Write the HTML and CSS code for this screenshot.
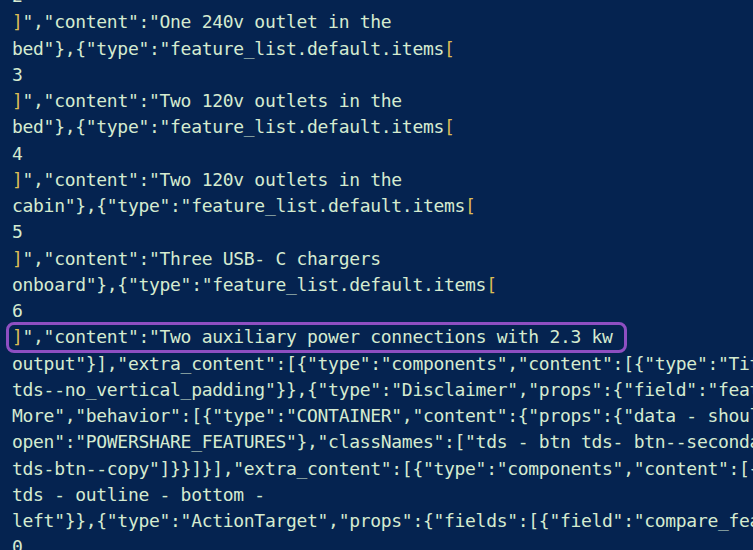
FILE: index.html
```html
<!DOCTYPE html>
<html>
<head>
<meta charset="utf-8">
<link rel="stylesheet" href="styles.css">
</head>
<body>
<div class="code">
<div class="ln">2</div>
<div class="ln"><span class="br">]</span>","content":"One 240v outlet in the</div>
<div class="ln">bed"},{"type":"feature_list.default.items<span class="br">[</span></div>
<div class="ln">3</div>
<div class="ln"><span class="br">]</span>","content":"Two 120v outlets in the</div>
<div class="ln">bed"},{"type":"feature_list.default.items<span class="br">[</span></div>
<div class="ln">4</div>
<div class="ln"><span class="br">]</span>","content":"Two 120v outlets in the</div>
<div class="ln">cabin"},{"type":"feature_list.default.items<span class="br">[</span></div>
<div class="ln">5</div>
<div class="ln"><span class="br">]</span>","content":"Three USB- C chargers</div>
<div class="ln">onboard"},{"type":"feature_list.default.items<span class="br">[</span></div>
<div class="ln">6</div>
<div class="ln hl"><span class="br">]</span>","content":"Two auxiliary power connections with 2.3 kw</div>
<div class="ln">output"}],"extra_content":[{"type":"components","content":[{"type":"Tit</div>
<div class="ln">tds--no_vertical_padding"}},{"type":"Disclaimer","props":{"field":"feat</div>
<div class="ln">More","behavior":[{"type":"CONTAINER","content":{"props":{"data - shoul</div>
<div class="ln">open":"POWERSHARE_FEATURES"},"classNames":["tds - btn tds- btn--seconda</div>
<div class="ln">tds-btn--copy"]}}]}],"extra_content":[{"type":"components","content":[{</div>
<div class="ln">tds - outline - bottom -</div>
<div class="ln">left"}},{"type":"ActionTarget","props":{"fields":[{"field":"compare_fea</div>
<div class="ln">0</div>
</div>
</body>
</html>
```
FILE: styles.css
```css
html, body {
  margin: 0;
  padding: 0;
  background: #052350;
  overflow: hidden;
}
body {
  width: 753px;
  height: 550px;
}
.code {
  height: 567px;
  margin-top: -17px;
  padding-left: 12px;
  font-family: "DejaVu Sans Mono", "Liberation Mono", monospace;
  font-size: 18px;
  letter-spacing: -0.3px;
  line-height: 26.25px;
  color: #d5ebd0;
  overflow: hidden;
}
.ln {
  height: 26.25px;
  white-space: pre;
}
.br {
  color: #dcbc55;
}
.hl {
  width: fit-content;
  margin-left: -4px;
  padding-left: 4px;
  padding-right: 12px;
  border-radius: 6px;
  outline: 3px solid #8f4fc2;
  outline-offset: -1px;
}
```
